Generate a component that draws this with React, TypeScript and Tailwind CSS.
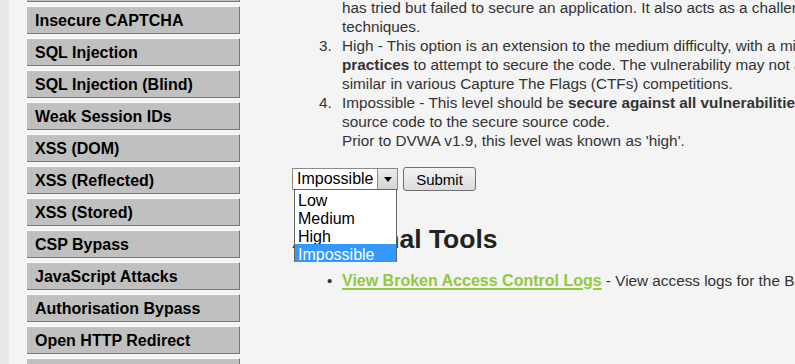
import React from "react";

const menu = [
  "File Upload",
  "Insecure CAPTCHA",
  "SQL Injection",
  "SQL Injection (Blind)",
  "Weak Session IDs",
  "XSS (DOM)",
  "XSS (Reflected)",
  "XSS (Stored)",
  "CSP Bypass",
  "JavaScript Attacks",
  "Authorisation Bypass",
  "Open HTTP Redirect",
  "Cryptography",
];

function Line({ children }: { children: React.ReactNode }) {
  return <div className="whitespace-nowrap h-[19px]">{children}</div>;
}

export default function App() {
  return (
    <div
      className="w-[795px] h-[364px] overflow-hidden bg-[#f4f4f4] flex relative"
      style={{ fontFamily: '"Liberation Sans", Arial, sans-serif' }}
    >
      <div className="w-[9px] h-full bg-[#e9e9e9] shrink-0" />
      <div className="pl-[18px] shrink-0">
        <div className="mt-[-26px] flex flex-col gap-[4px]">
          {menu.map((m) => (
            <div
              key={m}
              className="w-[213px] h-[28px] bg-[#c0c0c0] border-t border-t-[#fdfdfd] border-r border-b border-r-[#74777e] border-b-[#74777e] pl-[8px] pt-[2px] flex items-center text-[16px] font-bold text-black whitespace-nowrap"
            >
              {m}
            </div>
          ))}
        </div>
      </div>
      <div className="ml-[52px] w-[900px] shrink-0 text-[#333] relative">
        <div className="mt-[-2px] text-[15.3px] leading-[19px]">
          <div className="flex">
            <div className="w-[50px] shrink-0" />
            <div>
              <Line>
                has tried but failed to secure an application. It also acts as a challenge to users to refine their exploitation
              </Line>
              <Line>techniques.</Line>
            </div>
          </div>
          <div className="flex">
            <div className="w-[27px] shrink-0" />
            <div className="w-[23px] shrink-0">3.</div>
            <div>
              <Line>
                High - This option is an extension to the medium difficulty, with a mixture of harder or alternative bad
              </Line>
              <Line>
                <b>practices</b> to attempt to secure the code. The vulnerability may not allow the same extent of the exploitation,
              </Line>
              <Line>similar in various Capture The Flags (CTFs) competitions.</Line>
            </div>
          </div>
          <div className="flex">
            <div className="w-[27px] shrink-0" />
            <div className="w-[23px] shrink-0">4.</div>
            <div>
              <Line>
                Impossible - This level should be <b>secure against all vulnerabilities</b>. It is used to compare the vulnerable
              </Line>
              <Line>source code to the secure source code.</Line>
              <Line>Prior to DVWA v1.9, this level was known as 'high'.</Line>
            </div>
          </div>
        </div>

        <div className="mt-[17px] flex items-center gap-[5px] h-[24px] relative">
          <div className="w-[106px] h-[22px] border border-[#8a8a8a] bg-white flex items-center text-[16px] text-black">
            <div className="flex-1 pl-[4px] whitespace-nowrap leading-none">Impossible</div>
            <div className="w-[20px] h-[20px] border-l border-[#8a8a8a] bg-gradient-to-b from-[#ececec] to-[#d4d4d4] flex items-center justify-center">
              <svg width="8" height="5" viewBox="0 0 8 5">
                <polygon points="0,0 8,0 4,5" fill="#000" />
              </svg>
            </div>
          </div>
          <button className="w-[73px] h-[24px] border border-[#707070] rounded-[3px] bg-gradient-to-b from-[#f3f3f3] to-[#dcdcdc] text-[15px] text-black leading-none">
            Submit
          </button>

          <div className="absolute left-[2px] top-[22px] w-[103px] h-[73px] border border-[#646464] bg-white text-[16px] text-black z-10">
            <div className="h-[18px] pl-[3px] leading-[21px] overflow-hidden">Low</div>
            <div className="h-[18px] pl-[3px] leading-[21px] overflow-hidden">Medium</div>
            <div className="h-[18px] pl-[3px] leading-[21px] overflow-hidden">High</div>
            <div className="h-[18px] pl-[3px] leading-[21px] overflow-hidden bg-[#3399ff] text-white">Impossible</div>
          </div>
        </div>

        <h3 className="mt-[33px] text-[26.5px] leading-[30px] font-bold text-[#222] whitespace-nowrap">
          Additional Tools
        </h3>

        <div className="mt-[17px] flex text-[16px] leading-[19px] whitespace-nowrap">
          <div className="w-[35px] shrink-0" />
          <div className="w-[15px] shrink-0 text-[15px]">•</div>
          <a className="font-bold text-[#93c83f] underline decoration-2 underline-offset-2">
            View Broken Access Control Logs
          </a>
          <span className="text-[15.3px]">&nbsp;- View access logs for the Broken Access Control vulnerability.</span>
        </div>
      </div>
    </div>
  );
}
